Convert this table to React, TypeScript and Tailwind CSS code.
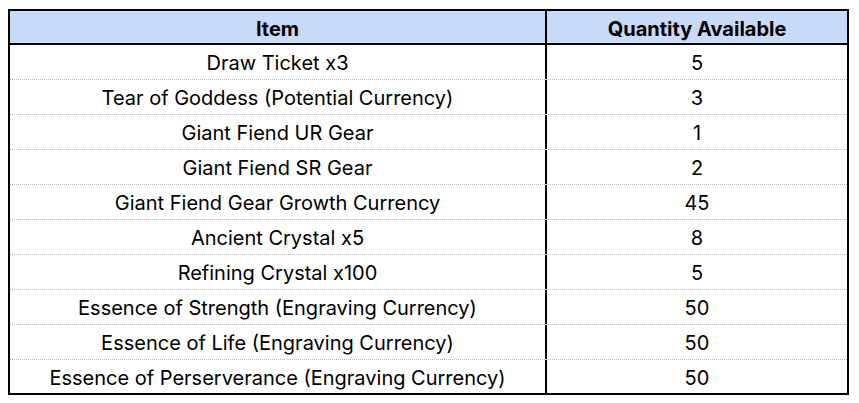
const rows: [string, string][] = [
  ['Draw Ticket x3', '5'],
  ['Tear of Goddess (Potential Currency)', '3'],
  ['Giant Fiend UR Gear', '1'],
  ['Giant Fiend SR Gear', '2'],
  ['Giant Fiend Gear Growth Currency', '45'],
  ['Ancient Crystal x5', '8'],
  ['Refining Crystal x100', '5'],
  ['Essence of Strength (Engraving Currency)', '50'],
  ['Essence of Life (Engraving Currency)', '50'],
  ['Essence of Perserverance (Engraving Currency)', '50'],
]

export default function App() {
  return (
    <div className="w-[859px] h-[403px] bg-white pl-[8px] pt-[9px] font-['Inter',sans-serif] text-[20px] text-black">
      <div className="w-[841px] border-2 border-black">
        <div className="grid grid-cols-[535px_2px_1fr] h-[34px] bg-[#c9daf8] border-b-2 border-black font-bold">
          <div className="flex items-center justify-center pt-[3px]">Item</div>
          <div className="bg-black" />
          <div className="flex items-center justify-center pt-[3px]">Quantity Available</div>
        </div>
        {rows.map(([item, qty], i) => (
          <div
            key={i}
            className={
              'grid grid-cols-[535px_2px_1fr] ' +
              (i < rows.length - 1 ? 'h-[35px] border-b border-dotted border-[#b8b8b8]' : 'h-[33px]')
            }
          >
            <div className="flex items-center justify-center pt-[2px]">{item}</div>
            <div className="bg-black" />
            <div className="flex items-center justify-center pt-[2px]">{qty}</div>
          </div>
        ))}
      </div>
    </div>
  )
}
